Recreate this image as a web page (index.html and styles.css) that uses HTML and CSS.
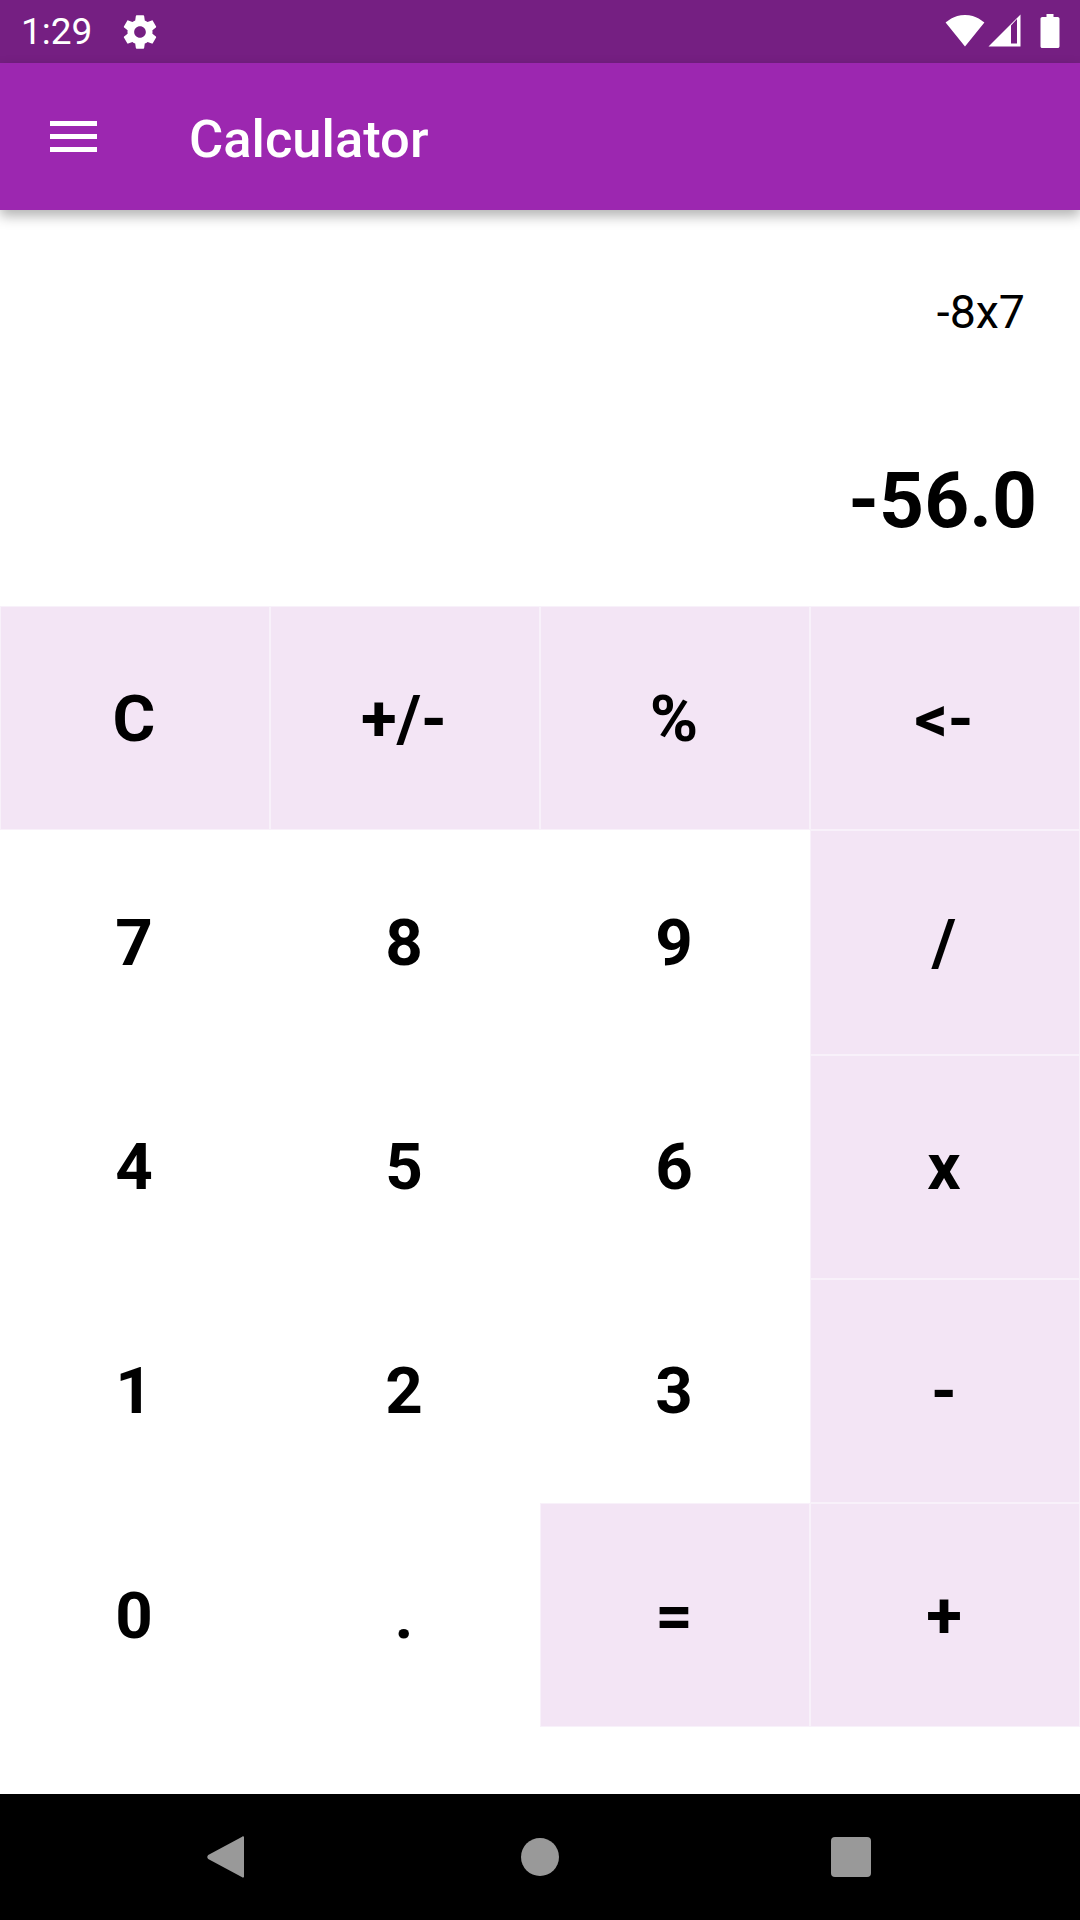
FILE: index.html
```html
<!DOCTYPE html>
<html lang="en">
  <head>
    <meta charset="UTF-8" />
    <meta name="viewport" content="width=device-width, initial-scale=1.0" />
    <title>Calculator</title>
    <link rel="stylesheet" href="styles.css">
  </head>
  <body>
    <div class="status-bar">
      <span class="clock">1:29</span>
      <svg class="gear" viewBox="0 0 24 24"><path d="M19.43 12.98c.04-.32.07-.64.07-.98s-.03-.66-.07-.98l2.11-1.65c.19-.15.24-.42.12-.64l-2-3.46c-.12-.22-.39-.3-.61-.22l-2.49 1c-.52-.4-1.08-.73-1.69-.98l-.38-2.65C14.46 2.18 14.25 2 14 2h-4c-.25 0-.46.18-.49.42l-.38 2.65c-.61.25-1.17.59-1.69.98l-2.49-1c-.23-.09-.49 0-.61.22l-2 3.46c-.13.22-.07.49.12.64l2.11 1.65c-.04.32-.07.65-.07.98s.03.66.07.98l-2.11 1.65c-.19.15-.24.42-.12.64l2 3.46c.12.22.39.3.61.22l2.49-1c.52.4 1.08.73 1.69.98l.38 2.65c.03.24.24.42.49.42h4c.25 0 .46-.18.49-.42l.38-2.65c.61-.25 1.17-.59 1.69-.98l2.49 1c.23.09.49 0 .61-.22l2-3.46c.12-.22.07-.49-.12-.64l-2.11-1.65zM12 15.5c-1.93 0-3.5-1.57-3.5-3.5s1.57-3.5 3.5-3.5 3.5 1.57 3.5 3.5-1.57 3.5-3.5 3.5z"/></svg>
      <div class="status-right">
        <svg class="wifi" viewBox="0 0 40 33"><path d="M20 32.500L.6 8.600C1.400 8 8.600 1 20 1s18.600 7 19.400 7.600z"/></svg>
        <svg class="signal" viewBox="0 0 33 33"><path fill-rule="evenodd" d="M32.500 32.500V.5L.5 32.500zM29 29.500h-6V11.500l6-6.500z"/></svg>
        <svg class="battery" viewBox="0 0 20 34"><path d="M6.500 0h7v3h4.200c1 0 1.800.8 1.800 1.800v27.400c0 1-.8 1.800-1.800 1.800H2.300c-1 0-1.800-.8-1.800-1.800V4.800c0-1 .8-1.800 1.800-1.800h4.200z"/></svg>
      </div>
    </div>

    <header class="app-bar">
      <div class="menu-icon"><span></span><span></span><span></span></div>
      <h1>Calculator</h1>
    </header>

    <main class="calc">
      <div class="display">
        <p class="expression">-8x7</p>
        <p class="result">-56.0</p>
      </div>
      <div class="keypad">
        <button class="key op">C</button>
        <button class="key op">+/-</button>
        <button class="key op">%</button>
        <button class="key op">&lt;-</button>
        <button class="key">7</button>
        <button class="key">8</button>
        <button class="key">9</button>
        <button class="key op">/</button>
        <button class="key">4</button>
        <button class="key">5</button>
        <button class="key">6</button>
        <button class="key op">x</button>
        <button class="key">1</button>
        <button class="key">2</button>
        <button class="key">3</button>
        <button class="key op">-</button>
        <button class="key">0</button>
        <button class="key">.</button>
        <button class="key op">=</button>
        <button class="key op">+</button>
      </div>
    </main>

    <nav class="nav-bar">
      <svg class="nav-back" viewBox="0 0 38 42"><path d="M37 1.500v39c0 1-1 1.500-1.800.8L1.200 23c-1.200-1-1.200-3 0-4L35.200.7c.8-.7 1.800-.2 1.800.8z"/></svg>
      <span class="nav-home"></span>
      <span class="nav-recent"></span>
    </nav>
  </body>
</html>
```

FILE: styles.css
```css
* {
  box-sizing: border-box;
}
body {
  font-family: Roboto, sans-serif;
  background-color: #ffffff;
  margin: 0;
  width: 1080px;
  height: 1920px;
  display: flex;
  flex-direction: column;
  overflow: hidden;
}
.status-bar {
  height: 63px;
  background-color: #751f82;
  color: #ffffff;
  display: flex;
  align-items: center;
  padding: 0 20px 0 21px;
}
.clock {
  font-size: 37px;
  font-weight: 400;
}
.gear {
  width: 40px;
  height: 40px;
  margin-left: 28px;
  fill: #ffffff;
}
.status-right {
  margin-left: auto;
  padding-bottom: 2px;
  display: flex;
  align-items: center;
}
.wifi {
  width: 40px;
  height: 33px;
  fill: #ffffff;
}
.signal {
  width: 33px;
  height: 33px;
  margin-left: 3px;
  fill: #ffffff;
}
.battery {
  width: 20px;
  height: 34px;
  margin-left: 19px;
  fill: #ffffff;
}
.app-bar {
  height: 147px;
  background-color: #9c27b0;
  color: #ffffff;
  display: flex;
  align-items: center;
  padding-left: 50px;
  box-shadow: 0 6px 12px rgba(0, 0, 0, 0.3);
  position: relative;
}
.menu-icon {
  width: 47px;
  display: flex;
  flex-direction: column;
  gap: 8px;
}
.menu-icon span {
  height: 5px;
  background-color: #ffffff;
}
.app-bar h1 {
  margin: 4px 0 0 92px;
  font-size: 52.500px;
  font-weight: 500;
}
.calc {
  flex: 1;
  display: flex;
  flex-direction: column;
}
.display {
  height: 396px;
  padding: 0 43px 0 0;
  display: flex;
  flex-direction: column;
  align-items: flex-end;
}
.expression {
  margin: 75px 0 0;
  font-size: 46.500px;
  line-height: 54px;
  padding-right: 12px;
}
.result {
  margin: 115px 0 0;
  font-size: 78.500px;
  line-height: 92px;
  font-weight: 700;
}
.keypad {
  display: grid;
  grid-template-columns: repeat(4, 270px);
  grid-auto-rows: 224.250px;
}
.key {
  font-family: Roboto, sans-serif;
  font-size: 65.500px;
  font-weight: 700;
  color: #000000;
  background-color: #ffffff;
  border: none;
  padding: 0 2px 0 0;
}
.key.op {
  background-color: #f3e5f5;
  border: 1px solid #f8f1fa;
}
.nav-bar {
  height: 126px;
  background-color: #000000;
  display: flex;
  align-items: center;
  padding-left: 207px;
}
.nav-back {
  width: 38px;
  height: 42px;
  fill: #999999;
}
.nav-home {
  width: 38px;
  height: 38px;
  margin-left: 276px;
  border-radius: 50%;
  background-color: #999999;
}
.nav-recent {
  width: 40px;
  height: 40px;
  margin-left: 272px;
  border-radius: 4px;
  background-color: #999999;
}
```
